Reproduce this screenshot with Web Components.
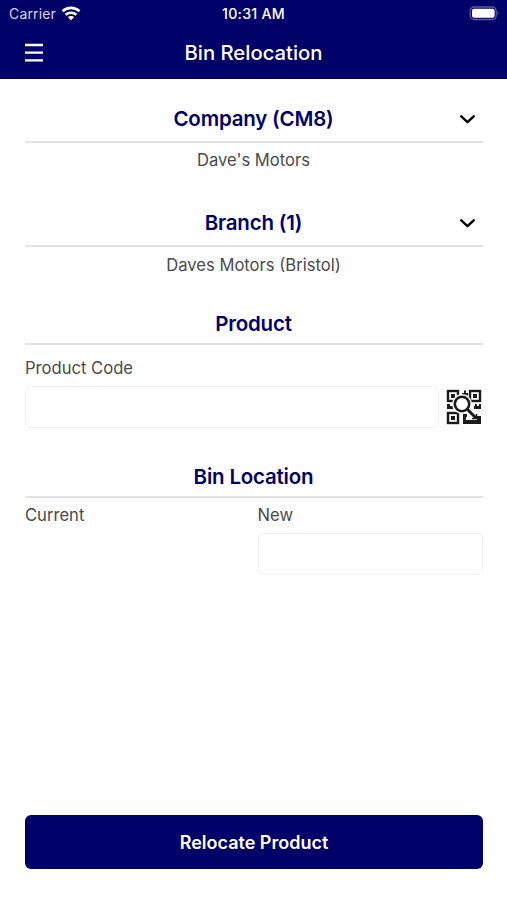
<!DOCTYPE html>
<html lang="en"><head><meta charset="utf-8"><title>Bin Relocation</title>
<style>html,body{margin:0}body{background:#fff;font-family:Inter,"Liberation Sans",sans-serif}</style></head>
<body>
<bin-screen></bin-screen>
<script>
const define=(name,css,html)=>customElements.define(name,class extends HTMLElement{
  constructor(){super();this.attachShadow({mode:'open'}).innerHTML='<style>*{box-sizing:border-box}'+css+'</style>'+html;}
});

define('status-bar',`
:host{display:grid;grid-template-columns:1fr auto 1fr;align-items:center;height:28px;padding:0 7px 0 9px;box-sizing:border-box;color:#fff;font-size:14px;line-height:28px}
.left{display:flex;align-items:center;gap:5px;color:#d9d9ee}.carrier{letter-spacing:.15px}.left svg{margin-top:-2px}
.time{font-weight:500;font-size:14.2px;letter-spacing:.25px;margin-left:-2px}
.right{display:flex;justify-content:flex-end}.right svg{margin-top:-2px}svg{display:block}`,
`<div class="left"><span class="carrier">Carrier</span>
<svg width="20" height="15" viewBox="0 0 20 15" fill="none" stroke="#fff" stroke-width="2.6"><path d="M1.5 5.2C6.4.7 13.6.7 18.5 5.2"/><path d="M4.6 8.8C7.7 6 12.3 6 15.4 8.8"/><path d="M10 14.2L6.8 11.1C8.7 9.5 11.3 9.5 13.2 11.1Z" fill="#fff" stroke="none"/></svg></div>
<span class="time">10:31 AM</span>
<div class="right"><svg width="31" height="15" viewBox="0 0 31 15"><rect x="1.2" y="1" width="26" height="12.5" rx="4" fill="none" stroke="#5c5ca3" stroke-width="1.3"/><rect x="3" y="2.8" width="22.6" height="9" rx="2" fill="#fff"/><path d="M28.6 5Q30.5 7.2 28.6 9.5Z" fill="#6666aa"/></svg></div>`);

define('nav-bar',`
:host{display:grid;grid-template-columns:60px 1fr 60px;align-items:center;height:51px;padding-bottom:2px;box-sizing:border-box;color:#fff}
svg{display:block;margin-left:25px}h1{margin:0;text-align:center;font-size:20.3px;font-weight:500;line-height:26px}`,
`<svg width="18" height="20" viewBox="0 0 18 20" stroke="#fff" stroke-width="2.3"><path d="M0 2H18M0 9.7H18M0 17.3H18"/></svg><h1><slot></slot></h1>`);

define('section-title',`
:host{display:grid;grid-template-columns:30px 1fr 30px;align-items:center;height:var(--h,46px);border-bottom:2px solid #e2e2e2;box-sizing:border-box}
h2{grid-column:2;margin:0 1px 0 0;text-align:center;color:#000069;font-size:20.5px;font-weight:600;line-height:26px;letter-spacing:var(--ls,-.2px)}
svg{display:none;justify-self:center;margin-left:-1px}:host([expandable]) svg{display:block}`,
`<h2><slot></slot></h2><svg width="17" height="12" viewBox="0 0 17 12" fill="none" stroke="#000" stroke-width="2.5" stroke-linecap="round" stroke-linejoin="round"><path d="M2.3 3.3L8.5 9.2L14.7 3.3"/></svg>`);

define('text-line',`
:host{display:block;color:#4a4a4a;font-size:16.6px;line-height:22px}:host([center]){text-align:center;padding-right:1px}`,
`<slot></slot>`);

define('text-box',`
:host{display:block;height:42px;box-sizing:border-box;border:1.5px solid #f0f0f0;border-radius:6px;background:#fff}`,``);

define('qr-scan',`:host{display:block;width:36px;height:36px}svg{display:block}`,
`<svg width="36" height="36" viewBox="0 0 36 36"><g fill="none" stroke="#1a1a1a" stroke-width="2.4"><rect x="2" y="2" width="10" height="10"/><rect x="24" y="2" width="10" height="10"/><rect x="2" y="24" width="10" height="10"/></g>
<path fill="#1a1a1a" d="M5 5h4v4H5zM27 5h4v4h-4zM5 27h4v4H5zM14 6.5h2V4h2V1.500h2V4h2v2.500zM1 15h3v2h3v-2h2v5H1zM29 15h2v2h2v-2h2v5h-7v-3h1zM17 25h4v3h-1v3h11v-4h4v8H17z"/>
<path d="M21.500 20.500L29 28" stroke="#fff" stroke-width="6"/>
<circle cx="16" cy="15" r="7.500" fill="#fff" stroke="#fff" stroke-width="5"/>
<circle cx="16" cy="15" r="7.200" fill="#fff" stroke="#1a1a1a" stroke-width="2.600"/><path d="M21.500 20.500L29.500 28.500" stroke="#1a1a1a" stroke-width="3" stroke-linecap="round"/><path d="M26 29.500H30.500V25" fill="none" stroke="#1a1a1a" stroke-width="1.500"/></svg>`);

define('primary-button',`
:host{display:block}button{display:block;width:100%;height:54px;border:0;border-radius:6px;background:#000069;color:#fff;font:600 18px/54px Inter,sans-serif;padding:1px 0 0}`,
`<button><slot></slot></button>`);

define('bin-screen',`
:host{display:flex;flex-direction:column;height:900px}
header{background:#000069;height:79px}
main{flex:1;display:flex;flex-direction:column;padding:17px 24px 31px 25px}
.row{display:flex;align-items:center;gap:7px}.row text-box{flex:1}.row qr-scan{margin-right:1px}
.cols{display:grid;grid-template-columns:1fr 1fr;gap:7px}.cols text-box{margin-top:7px}
primary-button{margin-top:auto}`,
`<header><status-bar></status-bar><nav-bar>Bin Relocation</nav-bar></header>
<main>
<section-title expandable style="--h:47px">Company (CM8)</section-title>
<text-line center style="margin-top:6px">Dave's Motors</text-line>
<section-title expandable style="margin-top:30px;--h:46px">Branch (1)</section-title>
<text-line center style="margin-top:7px">Daves Motors (Bristol)</text-line>
<section-title style="margin-top:29px;--h:40px">Product</section-title>
<text-line style="margin-top:12px">Product Code</text-line>
<div class="row" style="margin-top:7px"><text-box></text-box><qr-scan></qr-scan></div>
<section-title style="margin-top:30px;--h:40px">Bin Location</section-title>
<div class="cols" style="margin-top:6px"><text-line>Current</text-line><div><text-line>New</text-line><text-box></text-box></div></div>
<primary-button>Relocate Product</primary-button>
</main>`);
</script></body></html>
